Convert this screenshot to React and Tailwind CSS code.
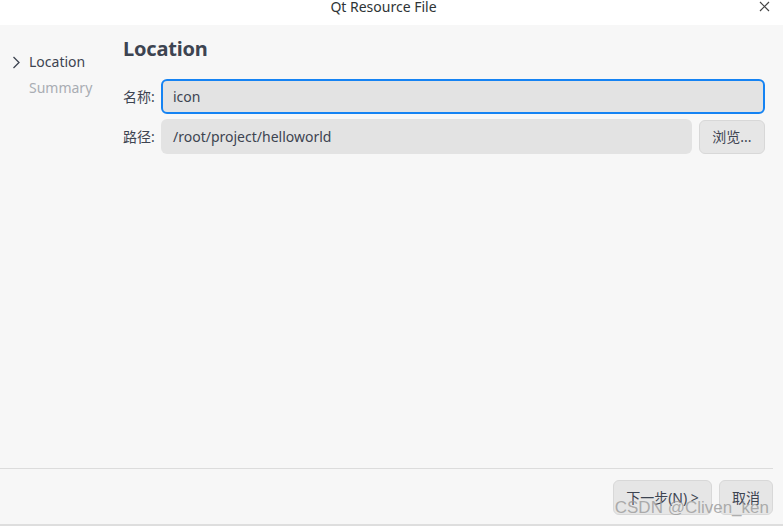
import React from 'react';

const font = { fontFamily: '"Noto Sans", "Noto Sans CJK SC", sans-serif' };

const App = () => {
  return (
    <div className="w-[783px] h-[526px] flex flex-col bg-[#f7f7f7] text-[#3d4451] overflow-hidden" style={font}>
      {/* title bar */}
      <div className="h-[25px] bg-white flex items-center justify-center relative shrink-0">
        <span className="text-[14px] text-[#2e3436] leading-none -mt-[11px] mr-[16px]">Qt Resource File</span>
        <svg className="absolute right-[13px] top-[1px] w-[11px] h-[11px]" viewBox="0 0 11 11">
          <path d="M1 1 L10 10 M10 1 L1 10" stroke="#444" strokeWidth="1.2" fill="none" />
        </svg>
      </div>

      {/* body */}
      <div className="flex-1 flex">
        <div className="w-[123px] shrink-0 pt-[29px] pl-[12px]">
          <div className="flex items-center h-[16px]">
            <svg className="w-[9px] h-[13px] mr-[8px]" viewBox="0 0 9 13">
              <path d="M1.5 1 L7 6.5 L1.5 12" stroke="#3d4451" strokeWidth="1.3" fill="none" />
            </svg>
            <span className="text-[14px] leading-none">Location</span>
          </div>
          <div className="pl-[17px] mt-[11px] text-[14px] leading-none text-[#a9adb3]">Summary</div>
        </div>

        <div className="flex-1 pr-[18px] pt-[14px]">
          <div className="text-[20px] font-bold leading-none text-[#3d4451] tracking-[-0.2px]">Location</div>
          <div className="mt-[20px] flex items-center">
            <span className="w-[38px] text-[14px]">名称:</span>
            <div className="flex-1 h-[35px] rounded-[6px] border-2 border-[#1583f3] bg-[#e3e3e3] flex items-center pl-[10px] text-[14px]">
              icon
            </div>
          </div>
          <div className="mt-[5px] flex items-center">
            <span className="w-[38px] text-[14px]">路径:</span>
            <div className="flex-1 h-[35px] rounded-[6px] bg-[#e3e3e3] flex items-center pl-[12px] text-[14px]">
              /root/project/helloworld
            </div>
            <div className="ml-[7px] w-[66px] h-[34px] rounded-[6px] border border-[#d8d8d8] bg-[#e6e6e6] flex items-center justify-center text-[14px]">
              浏览...
            </div>
          </div>
        </div>
      </div>

      {/* footer */}
      <div className="h-[56px] shrink-0 border-t border-[#dcdcdc] mr-[10px] flex items-start justify-end pt-[11px] relative">
        <div className="w-[99px] h-[35px] rounded-[6px] border border-[#d8d8d8] bg-[#e6e6e6] flex items-center justify-center text-[14px]">
          下一步(N) &gt;
        </div>
        <div className="ml-[7px] w-[54px] h-[35px] rounded-[6px] border border-[#d8d8d8] bg-[#e6e6e6] flex items-center justify-center text-[14px]">
          取消
        </div>
        <span
          className="absolute right-[4px] top-[30px] text-[17px] leading-none text-[#9a9a9a]/80"
          style={{ fontFamily: '"Liberation Sans", sans-serif' }}
        >
          CSDN @Cliven_ken
        </span>
      </div>
      <div className="h-[2px] bg-[#dedede] shrink-0" />
    </div>
  );
};

export default App;
